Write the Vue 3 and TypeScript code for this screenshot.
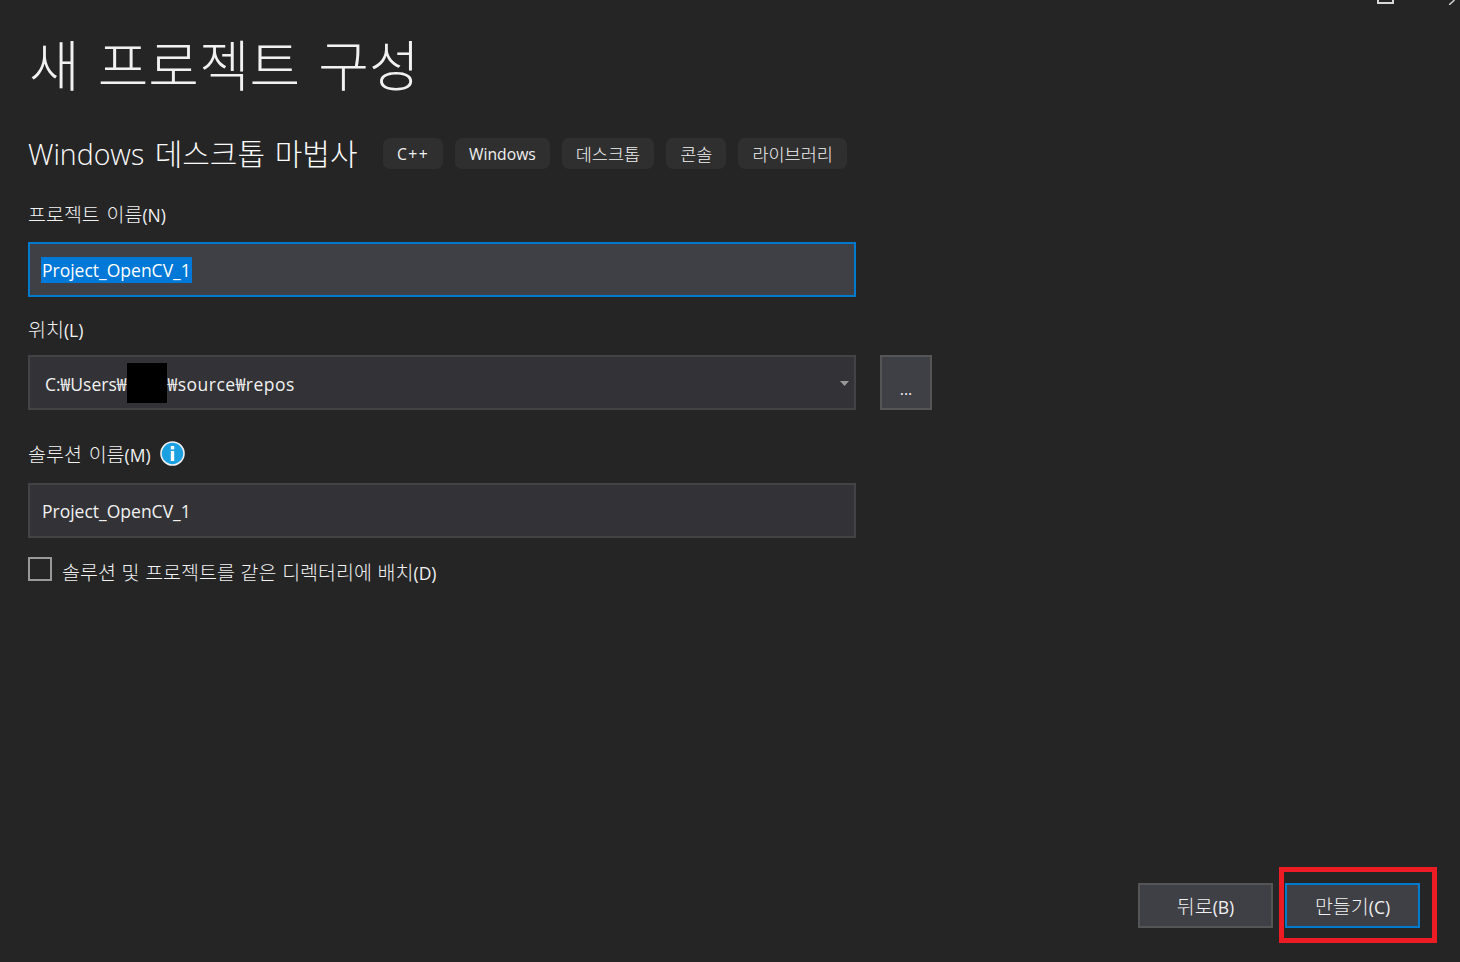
<script setup lang="ts">
interface Tag { text: string; ko: boolean; wide?: boolean }
const tags: Tag[] = [
  { text: 'C++', ko: false, wide: true },
  { text: 'Windows', ko: false },
  { text: '데스크톱', ko: true },
  { text: '콘솔', ko: true },
  { text: '라이브러리', ko: true },
]
</script>

<template>
  <div class="page">
    <div class="win-controls">
      <span class="win-max"></span>
      <svg class="win-close" width="6" height="5" viewBox="0 0 6 5"><path d="M0 5L5.5 0" stroke="#d8d8d8" stroke-width="1.4" fill="none" /></svg>
    </div>

    <h1 class="title">새 프로젝트 구성</h1>

    <div class="template-row">
      <span class="template-name">Windows <span class="template-ko">데스크톱 마법사</span></span>
      <div class="tags">
        <span v-for="tag in tags" :key="tag.text" class="tag" :class="{ 'tag-ko': tag.ko, 'tag-wide': tag.wide }">{{ tag.text }}</span>
      </div>
    </div>

    <label class="label first"><span class="ko spaced">프로젝트 이름</span>(N)</label>
    <div class="field focused"><span class="selected">Project_OpenCV_1</span></div>

    <label class="label second"><span class="ko">위치</span>(L)</label>
    <div class="location-row">
      <div class="field combo">
        <span class="path">C:₩Users₩</span><span class="redaction"></span><span class="path path-rest">₩source₩repos</span>
        <svg class="caret" width="9" height="5" viewBox="0 0 9 5"><path d="M0 0H9L4.5 5Z" fill="#999999" /></svg>
      </div>
      <button class="browse" type="button">...</button>
    </div>

    <div class="label third with-icon">
      <span><span class="ko spaced">솔루션 이름</span>(M)</span>
      <svg class="info" width="25" height="25" viewBox="0 0 25 25">
        <circle cx="12.5" cy="12.5" r="11.5" fill="#1ba1e2" stroke="#f0f0f0" stroke-width="1.6" />
        <rect x="10.8" y="5" width="3.4" height="3.4" fill="#fff" />
        <rect x="10.8" y="10" width="3.4" height="10" fill="#fff" />
      </svg>
    </div>
    <div class="field plain">Project_OpenCV_1</div>

    <div class="check-row">
      <span class="check"></span>
      <span class="check-text"><span class="ko check-ko">솔루션 및 프로젝트를 같은 디렉터리에 배치</span>(D)</span>
    </div>

    <div class="footer">
      <button class="action" type="button"><span class="ko">뒤로</span>(B)</button>
      <div class="primary-wrap">
        <button class="action primary" type="button"><span class="ko">만들기</span>(C)</button>
        <span class="annotation"></span>
      </div>
    </div>
  </div>
</template>

<style>
html, body { margin: 0; background: #252526; }
</style>

<style scoped>
.page {
  position: relative;
  box-sizing: border-box;
  width: 1460px;
  height: 962px;
  padding: 0 40px 34px 28px;
  display: flex;
  flex-direction: column;
  overflow: hidden;
  background: #252526;
  color: #f1f1f1;
  font-family: "Open Sans", "Noto Sans CJK KR", sans-serif;
  font-size: 17.5px;
}
.ko { font-family: "Noto Sans CJK KR", sans-serif; font-size: 19.5px; font-weight: 300; }
.spaced { word-spacing: 2.5px; }
.check-ko { word-spacing: 1.4px; }
.win-controls { position: absolute; top: 0; right: 0; width: 83px; height: 6px; }
.win-max {
  position: absolute; left: 0; top: -13px;
  width: 13px; height: 13px;
  border: 2px solid #d8d8d8;
}
.win-close { position: absolute; right: 5px; top: 0; }
.title {
  margin: 26px 0 0 1px;
  height: 72px;
  font-family: "Noto Sans CJK KR", sans-serif;
  font-size: 55px;
  line-height: 72px;
  font-weight: 300;
  word-spacing: 6px;
  color: #f1f1f1;
}
.template-row { display: flex; align-items: center; margin-top: 40px; height: 31px; }
.template-name {
  width: 355px;
  margin-top: -3px;
  font-size: 28.5px;
  font-weight: 300;
  word-spacing: 3px;
  white-space: nowrap;
  color: #fafafa;
}
.template-ko { font-family: "Noto Sans CJK KR", sans-serif; font-size: 30px; font-weight: 300; }
.tags { display: flex; gap: 12px; }
.tag {
  display: flex; align-items: center; justify-content: center;
  height: 31px; padding: 0 14px;
  background: #2f2f30;
  border-radius: 7px;
  font-size: 15.7px;
  white-space: nowrap;
}
.tag-ko { font-family: "Noto Sans CJK KR", sans-serif; font-size: 17.5px; font-weight: 300; }
.tag-wide { letter-spacing: 1.4px; }
.label { display: block; height: 26px; line-height: 26px; white-space: nowrap; }
.label.first { margin-top: 32px; }
.label.second { margin-top: 19px; }
.label.third { margin-top: 31px; }
.with-icon { display: flex; align-items: center; gap: 9px; }
.field {
  box-sizing: border-box;
  width: 828px; height: 55px;
  margin-top: 15px;
  padding: 0 12px;
  display: flex; align-items: center;
  background: #333337;
  border: 2px solid #434346;
  white-space: nowrap;
}
.label.third + .field { margin-top: 16px; }
.field.plain { padding-top: 1px; }
.field.focused { background: #3f3f46; border-color: #007acc; padding: 0 11px; }
.selected { background: #0078d7; color: #fff; height: 26px; line-height: 26px; padding: 0 1px 0 1px; }
.location-row { display: flex; gap: 24px; margin-top: 13px; }
.field.combo { position: relative; margin-top: 0; padding-left: 15px; }
.path { margin-top: 2px; }
.redaction { width: 40px; height: 40px; background: #000; margin-left: 1px; }
.path-rest { letter-spacing: 0.5px; }
.caret { position: absolute; right: 5px; top: 24px; }
.browse {
  box-sizing: border-box;
  width: 52px; height: 55px; padding: 12px 0 0;
  background: #3f3f46;
  border: 2px solid #555555;
  color: #f1f1f1;
  font: inherit;
  font-size: 16px;
}
.check-row { display: flex; align-items: center; gap: 10px; margin-top: 19px; height: 24px; }
.check { box-sizing: border-box; width: 24px; height: 24px; border: 2px solid #999999; }
.check-text { white-space: nowrap; padding-top: 5px; }
.footer { display: flex; justify-content: flex-end; gap: 12px; margin-top: auto; }
.action {
  box-sizing: border-box;
  width: 135px; height: 45px; padding: 0;
  background: #3f3f46;
  border: 2px solid #555555;
  color: #f1f1f1;
  font: inherit;
}
.primary { border-color: #007acc; }
.primary-wrap { position: relative; display: flex; }
.annotation {
  position: absolute;
  left: -6px; top: -16px;
  width: 158px; height: 76px;
  box-sizing: border-box;
  border: 5px solid #ed1c24;
  pointer-events: none;
}
.info { flex: none; margin-bottom: 2px; }
</style>
